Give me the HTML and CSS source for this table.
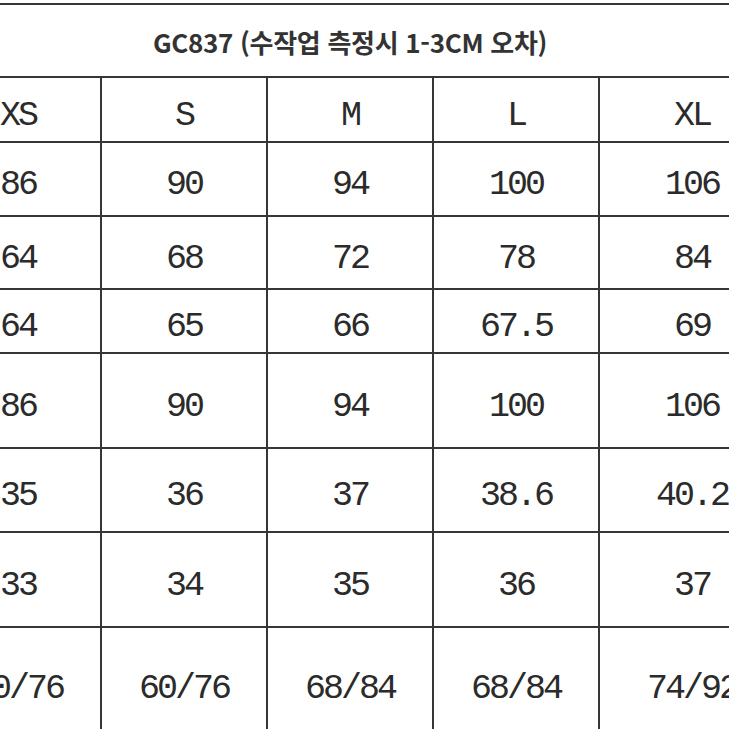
FILE: index.html
```html
<!DOCTYPE html>
<html lang="ko">
<head>
<meta charset="utf-8">
<title>GC837 사이즈표</title>
<link rel="stylesheet" href="styles.css">
</head>
<body>
<div class="sheet">
<table class="size-table">
  <colgroup>
    <col class="col-std"><col class="col-std"><col class="col-std"><col class="col-std"><col class="col-last">
  </colgroup>
  <tr class="row-title"><td colspan="5" class="title">GC837 (수작업 측정시 1-3CM 오차)</td></tr>
  <tr class="row-head"><td>XS</td><td>S</td><td>M</td><td>L</td><td>XL</td></tr>
  <tr class="row-a"><td>86</td><td>90</td><td>94</td><td>100</td><td>106</td></tr>
  <tr class="row-b"><td>64</td><td>68</td><td>72</td><td>78</td><td>84</td></tr>
  <tr class="row-c"><td>64</td><td>65</td><td>66</td><td>67.5</td><td>69</td></tr>
  <tr class="row-d"><td>86</td><td>90</td><td>94</td><td>100</td><td>106</td></tr>
  <tr class="row-e"><td>35</td><td>36</td><td>37</td><td>38.6</td><td>40.2</td></tr>
  <tr class="row-f"><td>33</td><td>34</td><td>35</td><td>36</td><td>37</td></tr>
  <tr class="row-g"><td>60/76</td><td>60/76</td><td>68/84</td><td>68/84</td><td>74/92</td></tr>
</table>
</div>
</body>
</html>
```

FILE: styles.css
```css
html, body {
  margin: 0;
  padding: 0;
  background: #ffffff;
}
body {
  width: 729px;
  height: 729px;
  overflow: hidden;
}
.sheet {
  padding-top: 3px;
}
.size-table {
  margin-left: -66px;
  border-collapse: collapse;
  table-layout: fixed;
  width: 850px;
}
.col-std { width: 166px; }
.col-last { width: 186px; }
.size-table td {
  box-sizing: border-box;
  border: 2px solid #363636;
  padding: 13px 0 0 0;
  text-align: center;
  vertical-align: middle;
  font-family: "Liberation Mono", monospace;
  font-size: 35px;
  letter-spacing: -3px;
  color: #2b2b2b;
  line-height: 1;
  white-space: nowrap;
  overflow: hidden;
}
.size-table td.title {
  font-family: "Noto Sans CJK KR", "Noto Sans", sans-serif;
  font-weight: 700;
  font-size: 26px;
  letter-spacing: -0.3px;
  color: #333333;
  padding: 2px 20px 0 0;
  border-left: none;
  border-right: none;
}
.row-title td { height: 73px; }
.row-head td { height: 65px; }
.row-a td { height: 74px; }
.row-b td { height: 73px; }
.row-c td { height: 64px; }
.row-d td { height: 95px; }
.row-e td { height: 84px; }
.row-f td { height: 95px; }
.row-g td { height: 112px; }
```
